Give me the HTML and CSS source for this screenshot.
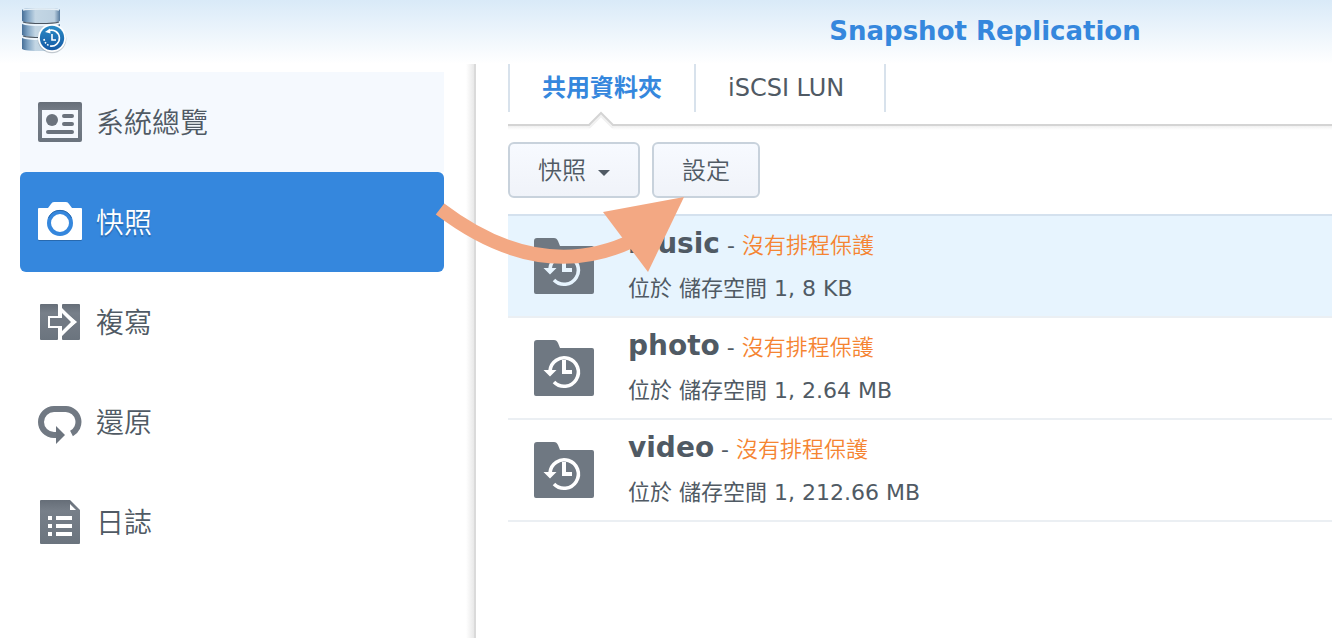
FILE: index.html
```html
<!DOCTYPE html>
<html lang="zh-Hant">
<head>
    <meta charset="UTF-8">
    <meta name="viewport" content="width=device-width, initial-scale=1.0">
    <title>Snapshot Replication</title>
    <link rel="stylesheet" href="styles.css">
</head>
<body>
    <!-- shared shapes -->
    <svg class="defs" width="0" height="0" aria-hidden="true">
        <symbol id="folder" viewBox="0 0 60 56">
            <path fill="#6f7882" d="M3 0h17c2 0 3 1 4 3l2 5h32q2 0 2 2v44q0 2-2 2H2q-2 0-2-2V3q0-3 3-3z"/>
            <path fill="none" stroke="currentColor" stroke-width="3.6" d="M16 31A14.2 14.2 0 1 1 20 42"/>
            <path fill="currentColor" d="M9.500 30h13L16 36.500zM28 20h4v10h6v4H28z"/>
        </symbol>
        <linearGradient id="gray" x1="0" y1="0" x2="0" y2="1">
            <stop offset="0" stop-color="#666e78"/>
            <stop offset=".25" stop-color="#777f89"/>
            <stop offset="1" stop-color="#6b747e"/>
        </linearGradient>
    </svg>

    <header class="header">
        <svg class="logo" width="48" height="48" viewBox="0 0 48 48" aria-hidden="true">
            <defs>
                <linearGradient id="disk">
                    <stop offset="0" stop-color="#466f98"/>
                    <stop offset=".15" stop-color="#7fa3c3"/>
                    <stop offset=".35" stop-color="#c3d6e4"/>
                    <stop offset=".85" stop-color="#bcd0e0"/>
                    <stop offset="1" stop-color="#54799d"/>
                </linearGradient>
                <linearGradient id="badge" x1="0" y1="0" x2="0" y2="1">
                    <stop offset="0" stop-color="#2a8bc6"/>
                    <stop offset="1" stop-color="#1659a4"/>
                </linearGradient>
            </defs>
            <g fill="url(#disk)">
                <path d="M0 2q0-2 19-2t19 2v11q-3 2-19 2T0 13z"/>
                <path d="M0 16q5 2 19 2t19-2v11q-3 2-19 2T0 27z"/>
                <path d="M0 30q5 2 19 2t19-2v11q-3 2-19 2T0 41z"/>
            </g>
            <path fill="none" stroke="#e6eff6" stroke-width="1.500" d="M1 2q3-1 18-1t18 1"/>
            <path fill="none" stroke="#4b5560" stroke-width="1.200" d="M1 14q5 1.500 18 1.500T37 14M1 28q5 1.500 18 1.500"/>
            <circle cx="30" cy="31" r="14.300" fill="#5c6a78" opacity=".35"/>
            <circle cx="30" cy="30" r="14" fill="#fff"/>
            <circle cx="30" cy="30" r="12.200" fill="url(#badge)"/>
            <path fill="none" stroke="#fff" stroke-width="1.600" d="M27 22.500a8 8 0 1 1 1 15.500M30 26v6h4"/>
            <path fill="#fff" d="M23 24l5-3.500.5 5z"/>
            <path fill="none" stroke="#fff" stroke-width="1.600" stroke-dasharray="1.600 1.600" d="M22 31q1 5 5 6.500"/>
        </svg>
        <h1 class="title">Snapshot Replication</h1>
    </header>

    <div class="body">
        <nav class="sidebar">
            <a class="nav-item hover" href="#">
                <svg width="44" height="44" viewBox="0 0 44 44" aria-hidden="true">
                    <path fill="url(#gray)" fill-rule="evenodd" d="M2 2h40q2 0 2 2v36q0 2-2 2H2q-2 0-2-2V4q0-2 2-2zM4 10v28h36V10z"/>
                    <circle cx="14" cy="20" r="6" fill="#6b737d"/>
                    <path fill="none" stroke="#6b737d" stroke-width="4" stroke-linecap="round" d="M26 16h8M26 24h8M10 32h24"/>
                </svg>
                <span>系統總覽</span>
            </a>
            <a class="nav-item active" href="#">
                <svg width="44" height="44" viewBox="0 0 44 44" aria-hidden="true">
                    <path fill="#2869ae" d="M0 37h44v2q0 2-1 2H1q-1 0-1-2z"/>
                    <path fill="#fff" d="M1 8h9l3-4q1-2 3-2h12q2 0 3 2l3 4h9q1 0 1 1v30q0 1-1 1H1q-1 0-1-1V9q0-1 1-1z"/>
                    <circle cx="22" cy="23" r="11" fill="none" stroke="#3587dd" stroke-width="4"/>
                    <path fill="none" stroke="#2869ae" d="M10.500 18a12.500 12.500 0 0 1 23 0"/>
                </svg>
                <span>快照</span>
            </a>
            <a class="nav-item" href="#">
                <svg width="44" height="44" viewBox="0 0 44 44" aria-hidden="true">
                    <path fill="url(#gray)" d="M3 4h16q1 0 1 1v11H10v12h10v11q0 1-1 1H3q-1 0-1-1V5q0-1 1-1zM25 4h16q1 0 1 1v34q0 1-1 1H25q-1 0-1-1v-3l14-14L24 8V5q0-1 1-1z"/>
                    <path fill="#717983" d="M12 18h12v-5l9 9-9 9v-5H12z"/>
                    <path fill="none" stroke="#fff" stroke-width="2" d="M11 17h12v-7l14.500 12L23 34v-7H11z"/>
                </svg>
                <span>複寫</span>
            </a>
            <a class="nav-item" href="#">
                <svg width="44" height="44" viewBox="0 0 44 44" aria-hidden="true">
                    <path fill="none" stroke="#717983" stroke-width="6" d="M19 35h-3a13 13 0 0 1 0-26h12a13 13 0 0 1 5.500 24.500"/>
                    <path fill="#6c747e" d="M18 26l9 9-9 9z"/>
                </svg>
                <span>還原</span>
            </a>
            <a class="nav-item" href="#">
                <svg width="44" height="44" viewBox="0 0 44 44" aria-hidden="true">
                    <path fill="url(#gray)" d="M3 0h29l10 10v33q0 1-1 1H3q-1 0-1-1V1q0-1 1-1z"/>
                    <path fill="#fff" d="M32 4l6 6h-6zM10 16h4v4h-4zM18 16h16v4H18zM10 24h4v4h-4zM18 24h16v4H18zM10 32h4v4h-4zM18 32h16v4H18z"/>
                </svg>
                <span>日誌</span>
            </a>
        </nav>

        <main class="content">
            <div class="tabs" role="tablist">
                <button class="tab selected" role="tab" aria-selected="true">共用資料夾</button>
                <button class="tab" role="tab" aria-selected="false">iSCSI LUN</button>
            </div>
            <div class="tab-line">
                <svg class="notch" width="28" height="20" viewBox="0 0 28 20" aria-hidden="true">
                    <path fill="#fff" d="M2 15L14 3l12 12v5H2z"/>
                    <path fill="none" stroke="#f1f1f1" stroke-width="2" d="M2 17L14 5l12 12"/>
                    <path fill="none" stroke="#d4d4d4" stroke-width="2" d="M1 14h1L14 2l12 12h1"/>
                </svg>
            </div>

            <div class="toolbar">
                <button class="btn">快照
                    <svg class="caret" width="12" height="6" viewBox="0 0 12 6" aria-hidden="true"><path fill="#505a64" d="M0 0h12L6 6z"/></svg>
                </button>
                <button class="btn">設定</button>
            </div>

            <ul class="list">
                <li class="row current">
                    <svg class="folder" width="60" height="56" aria-hidden="true"><use href="#folder"/></svg>
                    <div>
                        <div class="name"><strong>music</strong> - <span class="warn">沒有排程保護</span></div>
                        <div class="desc">位於 儲存空間 1, 8 KB</div>
                    </div>
                </li>
                <li class="row">
                    <svg class="folder" width="60" height="56" aria-hidden="true"><use href="#folder"/></svg>
                    <div>
                        <div class="name"><strong>photo</strong> - <span class="warn">沒有排程保護</span></div>
                        <div class="desc">位於 儲存空間 1, 2.64 MB</div>
                    </div>
                </li>
                <li class="row">
                    <svg class="folder" width="60" height="56" aria-hidden="true"><use href="#folder"/></svg>
                    <div>
                        <div class="name"><strong>video</strong> - <span class="warn">沒有排程保護</span></div>
                        <div class="desc">位於 儲存空間 1, 212.66 MB</div>
                    </div>
                </li>
            </ul>
        </main>
    </div>

    <!-- arrow from the menu item to the settings button -->
    <svg class="arrow" width="260" height="90" viewBox="430 190 260 90" aria-hidden="true">
        <path fill="none" stroke="#f3a883" stroke-width="14" d="M440 209Q540 285 634 240"/>
        <path fill="#f3a883" d="M684 197l-81 15 45 60z"/>
    </svg>
</body>
</html>
```
FILE: styles.css
```css
* {
    margin: 0;
    padding: 0;
    box-sizing: border-box;
}
body {
    font-family: "DejaVu Sans", "Noto Sans CJK TC", sans-serif;
    font-size: 22px;
    color: #505a64;
    background: #fff;
    height: 100vh;
    display: flex;
    flex-direction: column;
    overflow: hidden;
}
button {
    font: inherit;
    color: inherit;
    cursor: pointer;
}
.defs {
    position: absolute;
}

/* Header */
.header {
    display: flex;
    height: 64px;
    padding: 8px 0 0 22px;
    background: linear-gradient(#d9eaf8, #fff);
}
.logo {
    flex: none;
}
.title {
    flex: 1;
    margin-left: 568px;
    font-size: 26px;
    line-height: 46px;
    text-align: center;
    color: #3587dd;
    white-space: nowrap;
}

/* Sidebar */
.body {
    flex: 1;
    display: flex;
}
.sidebar {
    flex: none;
    width: 476px;
    padding: 8px 30px 0 20px;
    border-right: 2px solid #dadada;
    background: linear-gradient(to left, #e8e8e8, #fff 8px);
}
.nav-item {
    display: flex;
    align-items: center;
    gap: 14px;
    height: 100px;
    padding-left: 18px;
    font-size: 28px;
    font-weight: 350;
    line-height: 40px;
    color: #505a64;
    text-decoration: none;
}
.nav-item span {
    padding-top: 4px;
}
.nav-item.hover {
    background: #f5f9fe;
}
.nav-item.active {
    background: #3587dd;
    border-radius: 6px;
    color: #fff;
    text-shadow: 0 2px 1px #2869ae;
}

/* Content */
.content {
    flex: 1;
    padding-left: 32px;
}
.tabs {
    display: flex;
    height: 48px;
}
.tab {
    padding: 0 32px;
    border: 0;
    border-left: 2px solid #d8e2ec;
    background: none;
    font-size: 24px;
    line-height: 48px;
    text-align: left;
    white-space: nowrap;
}
.tab:last-child {
    min-width: 192px;
    border-right: 2px solid #d8e2ec;
}
.tab.selected {
    color: #3587dd;
    font-weight: bold;
}
.tab-line {
    position: relative;
    margin-top: 12px;
    height: 6px;
    border-top: 2px solid #d4d4d4;
    background: linear-gradient(#f0f0f0, #fff);
}
.notch {
    position: absolute;
    left: 79px;
    top: -15px;
}
.toolbar {
    display: flex;
    gap: 12px;
    margin: 12px 0 16px;
}
.btn {
    display: flex;
    align-items: center;
    gap: 12px;
    height: 56px;
    padding: 2px 28px 0;
    border: 2px solid #c8d2dc;
    border-radius: 6px;
    background: linear-gradient(#f7faff, #f0f3f9);
    font-size: 24px;
    font-weight: 350;
    line-height: 50px;
}
.caret {
    margin-top: 4px;
}

/* Folder list */
.list {
    list-style: none;
    border-top: 2px solid #d4e1ee;
}
.row {
    display: flex;
    align-items: center;
    gap: 34px;
    height: 102px;
    padding-left: 26px;
    border-bottom: 2px solid #ebeff3;
    white-space: nowrap;
}
.row.current {
    background: #e7f4fe;
}
.folder {
    color: #fff;
}
.current .folder {
    color: #e7f4fe;
}
.name,
.desc {
    line-height: 43px;
}
.name strong {
    font-size: 28px;
}
.warn {
    color: #f58432;
    font-weight: 350;
}

.arrow {
    position: absolute;
    left: 430px;
    top: 190px;
}
```
